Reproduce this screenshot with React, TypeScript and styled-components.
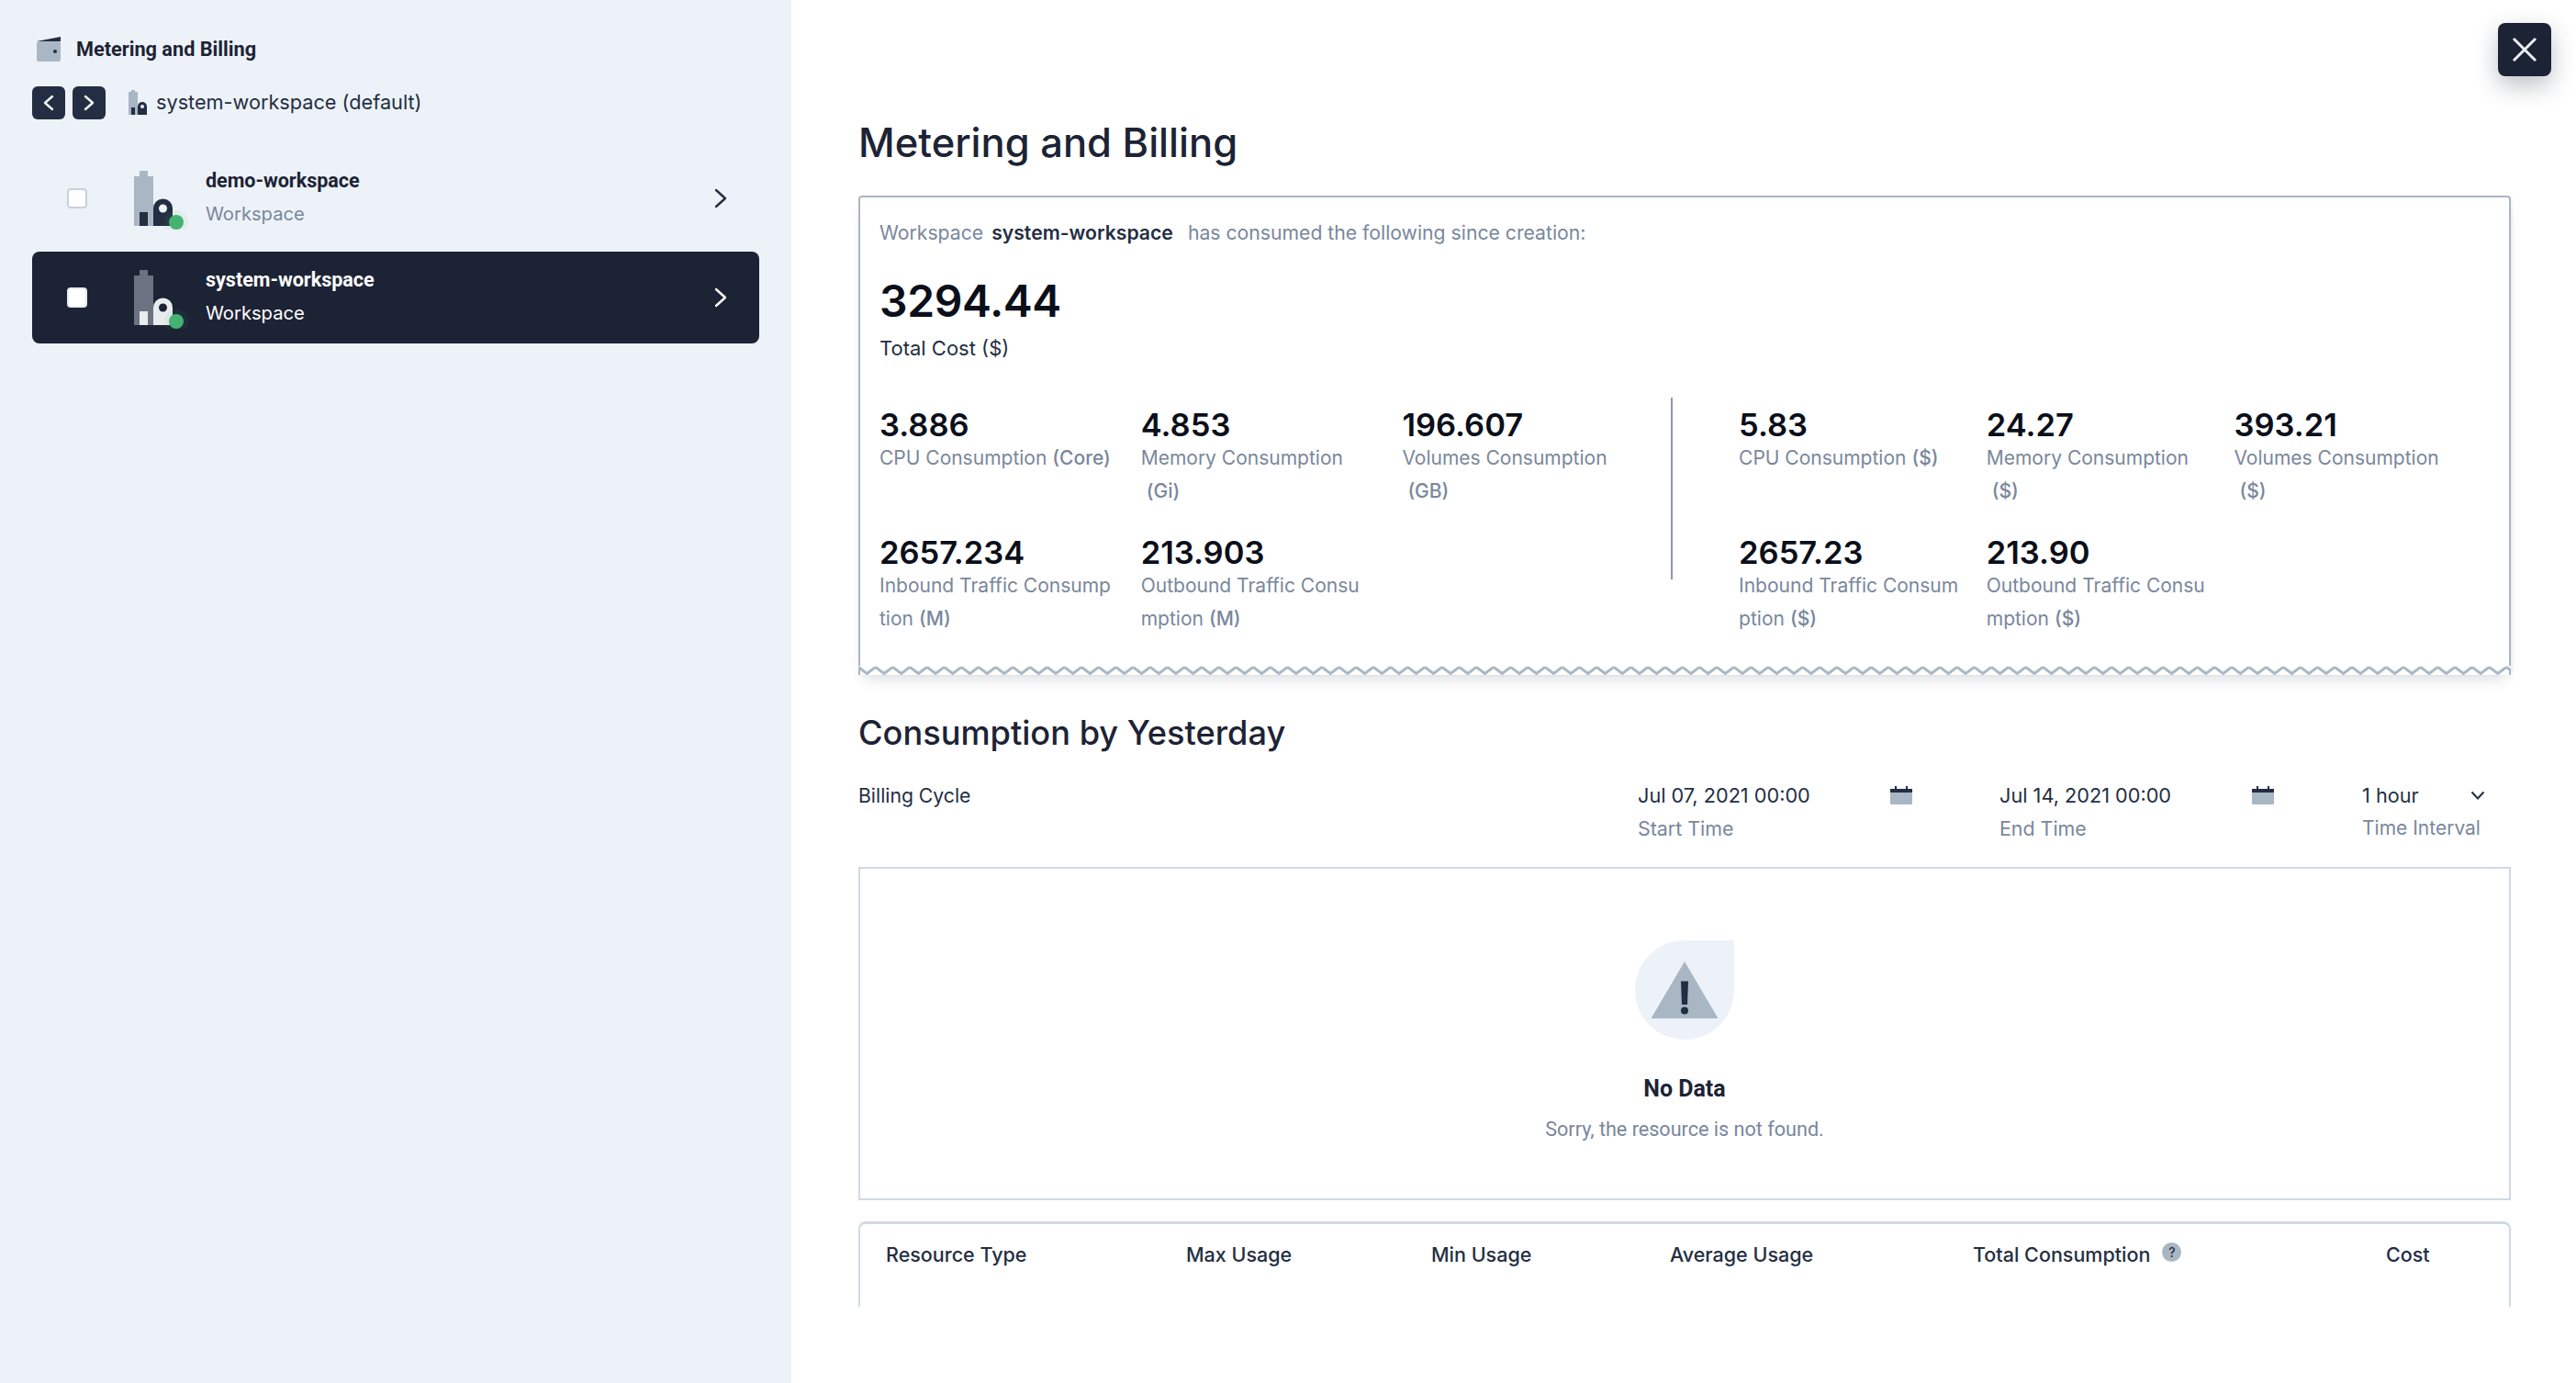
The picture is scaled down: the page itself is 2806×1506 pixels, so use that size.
import styled, { createGlobalStyle } from "styled-components";

const GlobalStyle = createGlobalStyle`
    html, body {
        margin: 0;
        padding: 0;
        background: #ffffff;
        overflow: hidden;
    }
    * {
        box-sizing: border-box;
    }
`;

const colors = {
    ink: "#1c2335",
    slate: "#242e42",
    muted: "#79879c",
    line: "#d1d9e3",
    steel: "#a9b6c4",
    panel: "#edf2f8",
    green: "#45b273",
};

const Page = styled.div`
    position: relative;
    display: flex;
    width: 2806px;
    height: 1506px;
    overflow: hidden;
    font-family: Inter, "Liberation Sans", sans-serif;
    color: ${colors.ink};
`;

const Sidebar = styled.aside`
    flex: 0 0 862px;
    height: 100%;
    padding: 39px 35px 0;
    background: ${colors.panel};
`;

const SidebarTitle = styled.div`
    display: flex;
    align-items: center;
    gap: 16px;
    height: 28px;
    padding-left: 4px;
    font-family: Roboto, sans-serif;
    font-size: 21.7px;
    font-weight: 700;
`;

const NavRow = styled.div`
    display: flex;
    align-items: center;
    gap: 8px;
    margin-top: 27px;
`;

const NavButton = styled.div`
    display: flex;
    align-items: center;
    justify-content: center;
    width: 36px;
    height: 36px;
    border-radius: 6px;
    background: ${colors.slate};
`;

const CurrentWorkspace = styled.div`
    display: flex;
    align-items: center;
    gap: 10px;
    margin-left: 17px;
    padding-bottom: 2px;
    font-size: 21.7px;
    color: ${colors.slate};
`;

const List = styled.div`
    display: flex;
    flex-direction: column;
    gap: 8px;
    margin-top: 36px;
`;

const Row = styled.div<{ $selected?: boolean }>`
    display: flex;
    align-items: center;
    height: 100px;
    padding: 0 35px 0 38px;
    border-radius: 8px;
    background: ${({ $selected }) => ($selected ? colors.ink : "transparent")};
    color: ${({ $selected }) => ($selected ? "#ffffff" : colors.ink)};
`;

const Checkbox = styled.span<{ $selected?: boolean }>`
    flex: none;
    width: 22px;
    height: 22px;
    margin-right: 51px;
    border: 2px solid ${({ $selected }) => ($selected ? "#e6ebf1" : "#c9d1db")};
    border-radius: 4px;
    background: #ffffff;
`;

const RowText = styled.div`
    margin: -2px 0 0 18px;
    flex: 1;
`;

const RowName = styled.div`
    font-family: Roboto, sans-serif;
    font-size: 21.5px;
    font-weight: 700;
    line-height: 36px;
`;

const RowKind = styled.div<{ $selected?: boolean }>`
    font-size: 20.2px;
    line-height: 36px;
    color: ${({ $selected }) => ($selected ? "#ffffff" : colors.muted)};
`;

const Main = styled.main`
    flex: 1;
    height: 1423px;
    padding: 131px 71px 0 73px;
    overflow: hidden;
`;

const Heading = styled.h1`
    margin: 0;
    font-size: 43.5px;
    font-weight: 500;
    line-height: 48px;
    color: ${colors.ink};
`;

const SummaryCard = styled.section`
    position: relative;
    height: 522px;
    margin-top: 34px;
    padding: 20px 21px 0;
    border: 2px solid ${colors.steel};
    border-bottom: 0;
    border-radius: 4px 4px 0 0;
    background: linear-gradient(#ffffff, #ffffff) top / 100% calc(100% - 8px) no-repeat;
    box-shadow: 0 10px 14px -6px rgba(36, 46, 66, 0.16), 2px 0 4px -2px rgba(36, 46, 66, 0.14);
`;

const Zigzag = styled.svg`
    position: absolute;
    left: -2px;
    bottom: 0;
    width: calc(100% + 4px);
    height: 10px;
`;

const Intro = styled.div`
    display: flex;
    gap: 16px;
    font-size: 21.2px;
    line-height: 36px;
    color: ${colors.muted};

    strong {
        margin-left: 3px;
        font-weight: 600;
        color: ${colors.slate};
    }
`;

const TotalValue = styled.div`
    margin-top: 21px;
    font-size: 48px;
    font-weight: 600;
    line-height: 72px;
    letter-spacing: -0.4px;
    color: #0b0f1a;
`;

const TotalLabel = styled.div`
    font-size: 22px;
    line-height: 30px;
    color: ${colors.slate};
`;

const StatsRow = styled.div`
    display: flex;
    margin-top: 39px;
`;

const StatsGroup = styled.div<{ $pitch: number; $label: number }>`
    display: grid;
    grid-template-columns: repeat(3, ${({ $pitch }) => $pitch}px);
    row-gap: 31px;
    margin-top: 12px;
    align-content: start;

    & > div {
        width: ${({ $label }) => $label}px;
    }
`;

const Divider = styled.div`
    flex: none;
    width: 2px;
    height: 198px;
    margin: 0 72px 0 8px;
    background: #8d99ab;
`;

const StatValue = styled.div`
    font-size: 34.5px;
    font-weight: 600;
    line-height: 36px;
    color: #0b0f1a;
`;

const StatLabel = styled.div`
    min-height: 72px;
    font-size: 21px;
    line-height: 36px;
    word-break: break-all;
    color: ${colors.muted};
`;

const StatUnit = styled.span`
    display: inline-block;
    margin-left: 6px;
    font-weight: 500;
`;

const SectionHeading = styled(Heading)`
    margin-top: 39px;
    font-size: 36.2px;
`;

const Filters = styled.div`
    display: flex;
    margin-top: 26px;
`;

const BillingCycle = styled.div`
    flex: 1;
    font-size: 21.2px;
    line-height: 36px;
    color: ${colors.slate};
`;

const Filter = styled.div<{ $width: number; $gap: number }>`
    flex: none;
    width: ${({ $width }) => $width}px;
    margin-right: ${({ $gap }) => $gap}px;
`;

const FilterValue = styled.div`
    display: flex;
    align-items: center;
    justify-content: space-between;
    font-size: 21.7px;
    line-height: 36px;
    color: ${colors.slate};
`;

const FilterLabel = styled.div<{ $tight?: boolean }>`
    font-size: ${({ $tight }) => ($tight ? 21 : 21.4)}px;
    line-height: 36px;
    white-space: nowrap;
    color: ${colors.muted};
`;

const EmptyBox = styled.div`
    display: flex;
    flex-direction: column;
    align-items: center;
    height: 363px;
    margin-top: 24px;
    padding-top: 78px;
    border: 2px solid ${colors.line};
    font-family: Roboto, sans-serif;
`;

const EmptyTitle = styled.div`
    margin-top: 39px;
    font-size: 25px;
    font-weight: 700;
    line-height: 30px;
    color: ${colors.ink};
`;

const EmptyText = styled.div`
    margin-top: 14px;
    font-size: 21.6px;
    line-height: 30px;
    color: ${colors.muted};
`;

const TableBox = styled.div`
    display: grid;
    grid-template-columns: 327px 267px 260px 330px 450px 1fr;
    height: 100px;
    margin-top: 23px;
    padding: 15px 0 0 28px;
    border: 2px solid ${colors.line};
    border-top-width: 3px;
    border-radius: 8px 8px 0 0;
    font-size: 21.5px;
    font-weight: 500;
    color: ${colors.slate};
`;

const TableHead = styled.div`
    display: flex;
    align-items: center;
    gap: 13px;
    height: 36px;
`;

const Hint = styled.span`
    display: flex;
    align-items: center;
    justify-content: center;
    width: 21px;
    height: 21px;
    margin-bottom: 5px;
    border-radius: 50%;
    background: ${colors.steel};
    font-size: 14px;
    color: ${colors.slate};
`;

const CloseButton = styled.div`
    position: absolute;
    top: 25px;
    right: 27px;
    display: flex;
    align-items: center;
    justify-content: center;
    width: 58px;
    height: 58px;
    border-radius: 8px;
    background: ${colors.ink};
    box-shadow: 0 10px 26px rgba(36, 46, 66, 0.3);
`;

const RowIcon = styled.svg`
    flex: none;
    margin-top: 4px;
`;

function Chevron({ dir, w, h, color }: { dir: "left" | "right"; w: number; h: number; color: string }) {
    const d = dir === "right" ? `M2 2 L${w - 2} ${h / 2} L2 ${h - 2}` : `M${w - 2} 2 L2 ${h / 2} L${w - 2} ${h - 2}`;
    return (
        <svg width={w} height={h} viewBox={`0 0 ${w} ${h}`} fill="none" style={{ flex: "none" }}>
            <path d={d} stroke={color} strokeWidth="2.4" strokeLinecap="round" strokeLinejoin="round" />
        </svg>
    );
}

function WalletIcon() {
    return (
        <svg width="28" height="28" viewBox="0 0 28 28">
            <path d="M1 6 L27 1 V6 Z" fill={colors.slate} />
            <rect x="1" y="6" width="26" height="22" rx="2" fill={colors.steel} />
            <circle cx="21" cy="17" r="2" fill={colors.slate} />
        </svg>
    );
}

function BuildingIcon({ selected }: { selected?: boolean }) {
    const tower = selected ? "#6b7282" : colors.steel;
    const front = selected ? "#e9ecef" : colors.slate;
    const hole = selected ? colors.ink : colors.panel;
    return (
        <RowIcon width="60" height="64" viewBox="0 0 60 64">
            <rect x="6" y="0" width="9" height="7" fill={tower} />
            <rect x="0" y="6" width="21" height="54" fill={tower} />
            <rect x="6" y="45" width="9" height="15" fill={front} />
            <path d="M21 60 V41 a10.5 10.5 0 0 1 21 0 V60 Z" fill={front} />
            <circle cx="31.5" cy="41" r="4.5" fill={hole} />
            <circle cx="46" cy="56" r="13" fill={colors.green} opacity="0.08" />
            <circle cx="46" cy="56" r="8" fill={colors.green} />
        </RowIcon>
    );
}

function SmallBuildingIcon() {
    return (
        <svg width="20" height="27" viewBox="0 0 20 27" style={{ flex: "none" }}>
            <rect x="3" y="0" width="4" height="3" fill={colors.steel} />
            <rect x="0" y="2" width="10" height="25" fill={colors.steel} />
            <rect x="3" y="19" width="4" height="8" fill={colors.slate} />
            <path d="M10 27 V18 a5 5 0 0 1 10 0 V27 Z" fill={colors.slate} />
            <circle cx="15" cy="18" r="2" fill={colors.panel} />
        </svg>
    );
}

function CalendarIcon() {
    return (
        <svg width="24" height="20" viewBox="0 0 24 20">
            <rect x="0" y="7" width="24" height="13" rx="1" fill={colors.steel} />
            <path d="M0 3 H5 V0 H7 V3 H17 V0 H19 V3 H24 V7 H0 Z" fill={colors.slate} />
        </svg>
    );
}

function WarningIcon() {
    return (
        <svg width="108" height="108" viewBox="0 0 108 108">
            <path d="M54 0 H108 V54 A54 54 0 1 1 54 0 Z" fill={colors.panel} />
            <path d="M54 23 L90.5 85 H17.5 Z" fill={colors.steel} />
            <path d="M50 44.5 H58 L57 70 H51 Z" fill={colors.slate} />
            <circle cx="54" cy="76.5" r="4" fill={colors.slate} />
        </svg>
    );
}

const stats = [
    { value: "3.886", label: "CPU Consumption", unit: "(Core)" },
    { value: "4.853", label: "Memory Consumption", unit: "(Gi)" },
    { value: "196.607", label: "Volumes Consumption", unit: "(GB)" },
    { value: "2657.234", label: "Inbound Traffic Consumption", unit: "(M)" },
    { value: "213.903", label: "Outbound Traffic Consumption", unit: "(M)" },
];

const costs = [
    { value: "5.83", label: "CPU Consumption", unit: "($)" },
    { value: "24.27", label: "Memory Consumption", unit: "($)" },
    { value: "393.21", label: "Volumes Consumption", unit: "($)" },
    { value: "2657.23", label: "Inbound Traffic Consumption", unit: "($)" },
    { value: "213.90", label: "Outbound Traffic Consumption", unit: "($)" },
];

const workspaces = [
    { name: "demo-workspace", selected: false },
    { name: "system-workspace", selected: true },
];

export default function App() {
    return (
        <Page>
            <GlobalStyle />
            <Sidebar>
                <SidebarTitle>
                    <WalletIcon />
                    Metering and Billing
                </SidebarTitle>
                <NavRow>
                    <NavButton>
                        <Chevron dir="left" w={12} h={18} color="#eff4f9" />
                    </NavButton>
                    <NavButton>
                        <Chevron dir="right" w={12} h={18} color="#eff4f9" />
                    </NavButton>
                    <CurrentWorkspace>
                        <SmallBuildingIcon />
                        system-workspace (default)
                    </CurrentWorkspace>
                </NavRow>
                <List>
                    {workspaces.map((w) => (
                        <Row key={w.name} $selected={w.selected}>
                            <Checkbox $selected={w.selected} />
                            <BuildingIcon selected={w.selected} />
                            <RowText>
                                <RowName>{w.name}</RowName>
                                <RowKind $selected={w.selected}>Workspace</RowKind>
                            </RowText>
                            <Chevron dir="right" w={14} h={22} color={w.selected ? "#ffffff" : colors.slate} />
                        </Row>
                    ))}
                </List>
            </Sidebar>

            <Main>
                <Heading>Metering and Billing</Heading>
                <SummaryCard>
                    <Intro>
                        <span>
                            Workspace <strong>system-workspace</strong>
                        </span>
                        <span>has consumed the following since creation:</span>
                    </Intro>
                    <TotalValue>3294.44</TotalValue>
                    <TotalLabel>Total Cost ($)</TotalLabel>
                    <StatsRow>
                        <StatsGroup $pitch={284.7} $label={255}>
                            {stats.map((s) => (
                                <div key={s.label}>
                                    <StatValue>{s.value}</StatValue>
                                    <StatLabel>
                                        {s.label}
                                        <StatUnit>{s.unit}</StatUnit>
                                    </StatLabel>
                                </div>
                            ))}
                        </StatsGroup>
                        <Divider />
                        <StatsGroup $pitch={269.7} $label={246}>
                            {costs.map((s) => (
                                <div key={s.label}>
                                    <StatValue>{s.value}</StatValue>
                                    <StatLabel>
                                        {s.label}
                                        <StatUnit>{s.unit}</StatUnit>
                                    </StatLabel>
                                </div>
                            ))}
                        </StatsGroup>
                    </StatsRow>
                    <Zigzag>
                        <defs>
                            <pattern id="zigzag" width="18.7" height="10" patternUnits="userSpaceOnUse">
                                <path d="M0 1.5 L9.35 8.5 L18.7 1.5 V0 H0 Z" fill="#ffffff" />
                                <path d="M0 1.5 L9.35 8.5 L18.7 1.5" fill="none" stroke={colors.steel} strokeWidth="3" />
                            </pattern>
                        </defs>
                        <rect width="100%" height="10" fill="url(#zigzag)" />
                    </Zigzag>
                </SummaryCard>

                <SectionHeading>Consumption by Yesterday</SectionHeading>
                <Filters>
                    <BillingCycle>Billing Cycle</BillingCycle>
                    <Filter $width={299} $gap={95}>
                        <FilterValue>
                            Jul 07, 2021 00:00
                            <CalendarIcon />
                        </FilterValue>
                        <FilterLabel>Start Time</FilterLabel>
                    </Filter>
                    <Filter $width={299} $gap={96}>
                        <FilterValue>
                            Jul 14, 2021 00:00
                            <CalendarIcon />
                        </FilterValue>
                        <FilterLabel>End Time</FilterLabel>
                    </Filter>
                    <Filter $width={134} $gap={28}>
                        <FilterValue>
                            1 hour
                            <svg width="16" height="10" viewBox="0 0 16 10" fill="none">
                                <path d="M1.5 1.5 L8 8.5 L14.5 1.5" stroke={colors.slate} strokeWidth="2" />
                            </svg>
                        </FilterValue>
                        <FilterLabel $tight>Time Interval</FilterLabel>
                    </Filter>
                </Filters>

                <EmptyBox>
                    <WarningIcon />
                    <EmptyTitle>No Data</EmptyTitle>
                    <EmptyText>Sorry, the resource is not found.</EmptyText>
                </EmptyBox>

                <TableBox>
                    <TableHead>Resource Type</TableHead>
                    <TableHead>Max Usage</TableHead>
                    <TableHead>Min Usage</TableHead>
                    <TableHead>Average Usage</TableHead>
                    <TableHead>
                        Total Consumption
                        <Hint>?</Hint>
                    </TableHead>
                    <TableHead>Cost</TableHead>
                </TableBox>
            </Main>

            <CloseButton>
                <svg width="28" height="28" viewBox="0 0 28 28" fill="none">
                    <path d="M2 2 L26 26 M26 2 L2 26" stroke="#eef1f4" strokeWidth="3" />
                </svg>
            </CloseButton>
        </Page>
    );
}
